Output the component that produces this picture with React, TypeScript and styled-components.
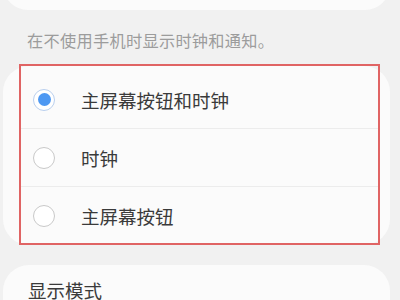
import React from "react";
import styled, { createGlobalStyle } from "styled-components";

const Global = createGlobalStyle`
  html, body { margin: 0; padding: 0; background: #f1f1f1; }
  body { font-family: "Noto Sans CJK SC", "Noto Sans", sans-serif; }
  #root { width: 400px; height: 300px; overflow: hidden; }
`;

const Page = styled.div`
  width: 400px;
  height: 300px;
  overflow: hidden;
  display: flex;
  flex-direction: column;
  padding: 0 10px 0 3px;
  box-sizing: border-box;
  background: #f1f1f1;
`;

const TopCard = styled.div`
  margin-top: -40px;
  height: 50px;
  flex-shrink: 0;
  background: #fbfbfb;
  border-radius: 26px;
`;

const Caption = styled.div`
  height: 56px;
  flex-shrink: 0;
  display: flex;
  align-items: center;
  padding-left: 24px;
  padding-top: 4px;
  box-sizing: border-box;
  font-size: 16.2px;
  color: #9c9c9c;
  letter-spacing: 0.3px;
`;

const Wrap = styled.div`
  position: relative;
  flex-shrink: 0;
`;

const Card = styled.div`
  background: #fbfbfb;
  border-radius: 26px;
  padding-top: 5px;
  display: flex;
  flex-direction: column;
`;

const Highlight = styled.div`
  position: absolute;
  left: 16px;
  top: -2px;
  width: 361px;
  height: 181px;
  border: 2px solid #e06464;
  box-sizing: border-box;
  pointer-events: none;
`;

const Row = styled.div<{ $divider?: boolean }>`
  height: 58px;
  display: flex;
  align-items: center;
  margin: 0 12px 0 17px;
  padding-left: 13px;
  box-sizing: border-box;
  border-bottom: ${(p) => (p.$divider ? "1px solid #ececec" : "none")};
`;

const Radio = styled.span<{ $on?: boolean }>`
  width: 22px;
  height: 22px;
  border-radius: 50%;
  box-sizing: border-box;
  border: ${(p) => (p.$on ? "1.5px solid #b9cfee" : "1px solid #c9c9c9")};
  background: #ffffff;
  display: flex;
  align-items: center;
  justify-content: center;
  flex-shrink: 0;
  &::after {
    content: "";
    display: ${(p) => (p.$on ? "block" : "none")};
    width: 13px;
    height: 13px;
    border-radius: 50%;
    background: #4d98f2;
  }
`;

const Label = styled.span`
  margin-left: 26px;
  font-size: 18.5px;
  color: #3a3a3a;
`;

const BottomCard = styled.div`
  margin-top: 20px;
  height: 80px;
  flex-shrink: 0;
  background: #fbfbfb;
  border-radius: 26px;
  padding: 12px 0 0 25px;
  box-sizing: border-box;
  font-size: 18.5px;
  color: #3a3a3a;
`;

const options = [
  { label: "主屏幕按钮和时钟", on: true },
  { label: "时钟", on: false },
  { label: "主屏幕按钮", on: false },
];

export default function App() {
  return (
    <>
      <Global />
      <Page>
        <TopCard />
        <Caption>在不使用手机时显示时钟和通知。</Caption>
        <Wrap>
          <Card>
            {options.map((o, i) => (
              <Row key={o.label} $divider={i < options.length - 1}>
                <Radio $on={o.on} />
                <Label>{o.label}</Label>
              </Row>
            ))}
          </Card>
          <Highlight />
        </Wrap>
        <BottomCard>显示模式</BottomCard>
      </Page>
    </>
  );
}
